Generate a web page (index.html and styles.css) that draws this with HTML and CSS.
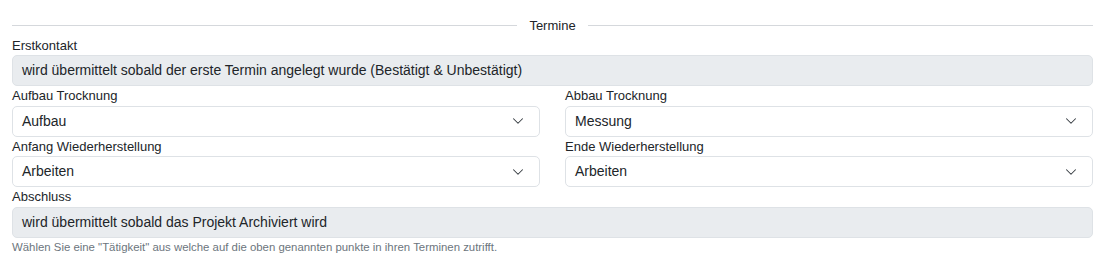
FILE: index.html
```html
<!DOCTYPE html>
<html lang="de">
<head>
    <meta charset="UTF-8">
    <meta name="viewport" content="width=device-width, initial-scale=1.0">
    <title>Termine</title>
    <link rel="stylesheet" href="styles.css">
</head>
<body>

    <div class="panel">
        <div class="divider"><span>Termine</span></div>

        <div class="field">
            <label>Erstkontakt</label>
            <div class="control disabled">wird übermittelt sobald der erste Termin angelegt wurde (Bestätigt &amp; Unbestätigt)</div>
        </div>

        <div class="row">
            <div class="field">
                <label>Aufbau Trocknung</label>
                <div class="control select">
                    <span>Aufbau</span>
                    <svg class="chevron" viewBox="0 0 16 16"><path d="m2 5 6 6 6-6"/></svg>
                </div>
            </div>
            <div class="field">
                <label>Abbau Trocknung</label>
                <div class="control select">
                    <span>Messung</span>
                    <svg class="chevron" viewBox="0 0 16 16"><path d="m2 5 6 6 6-6"/></svg>
                </div>
            </div>
        </div>

        <div class="row">
            <div class="field">
                <label>Anfang Wiederherstellung</label>
                <div class="control select">
                    <span>Arbeiten</span>
                    <svg class="chevron" viewBox="0 0 16 16"><path d="m2 5 6 6 6-6"/></svg>
                </div>
            </div>
            <div class="field">
                <label>Ende Wiederherstellung</label>
                <div class="control select">
                    <span>Arbeiten</span>
                    <svg class="chevron" viewBox="0 0 16 16"><path d="m2 5 6 6 6-6"/></svg>
                </div>
            </div>
        </div>

        <div class="field">
            <label>Abschluss</label>
            <div class="control disabled">wird übermittelt sobald das Projekt Archiviert wird</div>
        </div>

        <p class="help">Wählen Sie eine "Tätigkeit" aus welche auf die oben genannten punkte in ihren Terminen zutrifft.</p>
    </div>

</body>
</html>
```

FILE: styles.css
```css
body {
    margin: 0;
    font-family: "Liberation Sans", Arial, sans-serif;
    color: #212529;
    background: #ffffff;
}
.panel {
    padding: 15.5px 13px 0 12px;
}
.divider {
    display: flex;
    align-items: center;
    height: 20px;
    font-size: 13px;
}
.divider::before,
.divider::after {
    content: "";
    flex: 1;
    border-top: 1px solid #d5d8dc;
}
.divider span {
    padding: 0 12px;
}
.row {
    display: grid;
    grid-template-columns: 1fr 1fr;
    gap: 25px;
}
.field label {
    display: block;
    font-size: 13px;
    line-height: 19.5px;
}
.control {
    box-sizing: border-box;
    height: 31px;
    padding: 0 9px;
    border: 1px solid #dee2e6;
    border-radius: 5px;
    font-size: 14px;
    line-height: 29px;
    white-space: nowrap;
}
.control.disabled {
    background: #e9ecef;
}
.select {
    display: flex;
    align-items: center;
    justify-content: space-between;
    padding-right: 15px;
}
.chevron {
    width: 12px;
    height: 12px;
    fill: none;
    stroke: #343a40;
    stroke-width: 1.4;
    stroke-linecap: round;
    stroke-linejoin: round;
}
.help {
    margin: 3px 0 0;
    font-size: 11.4px;
    color: #6c757d;
}
```
